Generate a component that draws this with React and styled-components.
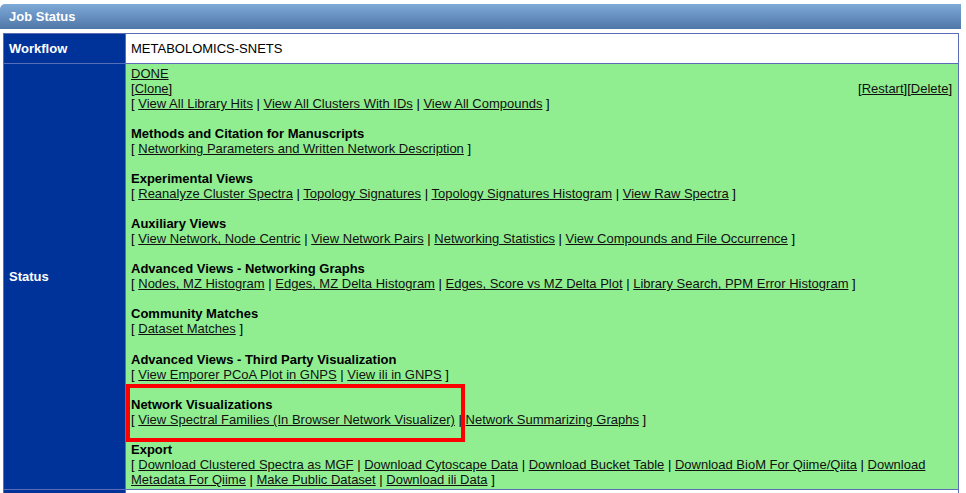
import React from 'react'
import styled, { createGlobalStyle } from 'styled-components'

const GlobalStyle = createGlobalStyle`
  body {
    margin: 0;
    background: #ffffff;
    font-family: 'Liberation Sans', Arial, sans-serif;
    font-size: 13px;
    color: #000;
  }
`

const sections = [
  {
    title: 'Methods and Citation for Manuscripts',
    links: ['Networking Parameters and Written Network Description'],
  },
  {
    title: 'Experimental Views',
    links: [
      'Reanalyze Cluster Spectra',
      'Topology Signatures',
      'Topology Signatures Histogram',
      'View Raw Spectra',
    ],
  },
  {
    title: 'Auxiliary Views',
    links: [
      'View Network, Node Centric',
      'View Network Pairs',
      'Networking Statistics',
      'View Compounds and File Occurrence',
    ],
  },
  {
    title: 'Advanced Views - Networking Graphs',
    links: [
      'Nodes, MZ Histogram',
      'Edges, MZ Delta Histogram',
      'Edges, Score vs MZ Delta Plot',
      'Library Search, PPM Error Histogram',
    ],
  },
  {
    title: 'Community Matches',
    links: ['Dataset Matches'],
  },
  {
    title: 'Advanced Views - Third Party Visualization',
    links: ['View Emporer PCoA Plot in GNPS', 'View ili in GNPS'],
  },
  {
    title: 'Network Visualizations',
    links: [
      'View Spectral Families (In Browser Network Visualizer)',
      'Network Summarizing Graphs',
    ],
    highlight: true,
  },
  {
    title: 'Export',
    links: [
      'Download Clustered Spectra as MGF',
      'Download Cytoscape Data',
      'Download Bucket Table',
      'Download BioM For Qiime/Qiita',
      'Download Metadata For Qiime',
      'Make Public Dataset',
      'Download ili Data',
    ],
  },
]

const LinkList = ({ links }) => (
  <Line>
    [{' '}
    {links.map((l, i) => (
      <React.Fragment key={l}>
        {i > 0 && ' | '}
        <Link href='#'>{l}</Link>
      </React.Fragment>
    ))}{' '}
    ]
  </Line>
)

const App = () => {
  return (
    <>
      <GlobalStyle />
      <Panel>
        <PanelHeader>Job Status</PanelHeader>
        <Grid>
          <Label>Workflow</Label>
          <Value>METABOLOMICS-SNETS</Value>

          <Label>Status</Label>
          <StatusCell>
            <Line>
              <Link href='#'>DONE</Link>
            </Line>
            <Line>
              [<Link href='#'>Clone</Link>]
              <Actions>
                [<Link href='#'>Restart</Link>][<Link href='#'>Delete</Link>]
              </Actions>
            </Line>
            <LinkList
              links={[
                'View All Library Hits',
                'View All Clusters With IDs',
                'View All Compounds',
              ]}
            />
            {sections.map((s) => (
              <Section key={s.title}>
                <Heading>{s.title}</Heading>
                <LinkList links={s.links} />
                {s.highlight && <Highlight />}
              </Section>
            ))}
          </StatusCell>

          <Label />
          <Value />
        </Grid>
      </Panel>
    </>
  )
}

const Panel = styled.div`
  padding-top: 4px;
  width: 961px;
`

const PanelHeader = styled.div`
  height: 25px;
  line-height: 25px;
  padding-left: 9px;
  border-radius: 5px 0 0 0;
  background: linear-gradient(to bottom, #7eaad8, #4f77a7);
  color: #ffffff;
  font-weight: bold;
  font-size: 13px;
  margin-bottom: 4px;
`

const Grid = styled.div`
  display: grid;
  grid-template-columns: 121px 832px;
  grid-template-rows: 29px auto 30px;
  gap: 1px;
  background: #5b6db6;
  border: 1px solid #5b6db6;
  margin-left: 3px;
  width: 954px;
`

const Label = styled.div`
  background: #003399;
  color: #ffffff;
  font-weight: bold;
  display: flex;
  align-items: center;
  padding-left: 5px;
`

const Value = styled.div`
  background: #ffffff;
  display: flex;
  align-items: center;
  padding-left: 5px;
`

const StatusCell = styled.div`
  background: #90ee90;
  padding: 2px 6px 2px 5px;
  line-height: 15px;
`

const Line = styled.div`
  line-height: 15px;
`

const Actions = styled.span`
  float: right;
`

const Section = styled.div`
  position: relative;
  margin-top: 15.1px;
`

const Heading = styled.div`
  font-weight: bold;
`

const Link = styled.a`
  color: #111111;
  text-decoration: underline;
`

const Highlight = styled.div`
  position: absolute;
  left: -5px;
  top: -13px;
  width: 339px;
  height: 58px;
  box-sizing: border-box;
  border: 4px solid #ff0000;
  pointer-events: none;
`

export default App
